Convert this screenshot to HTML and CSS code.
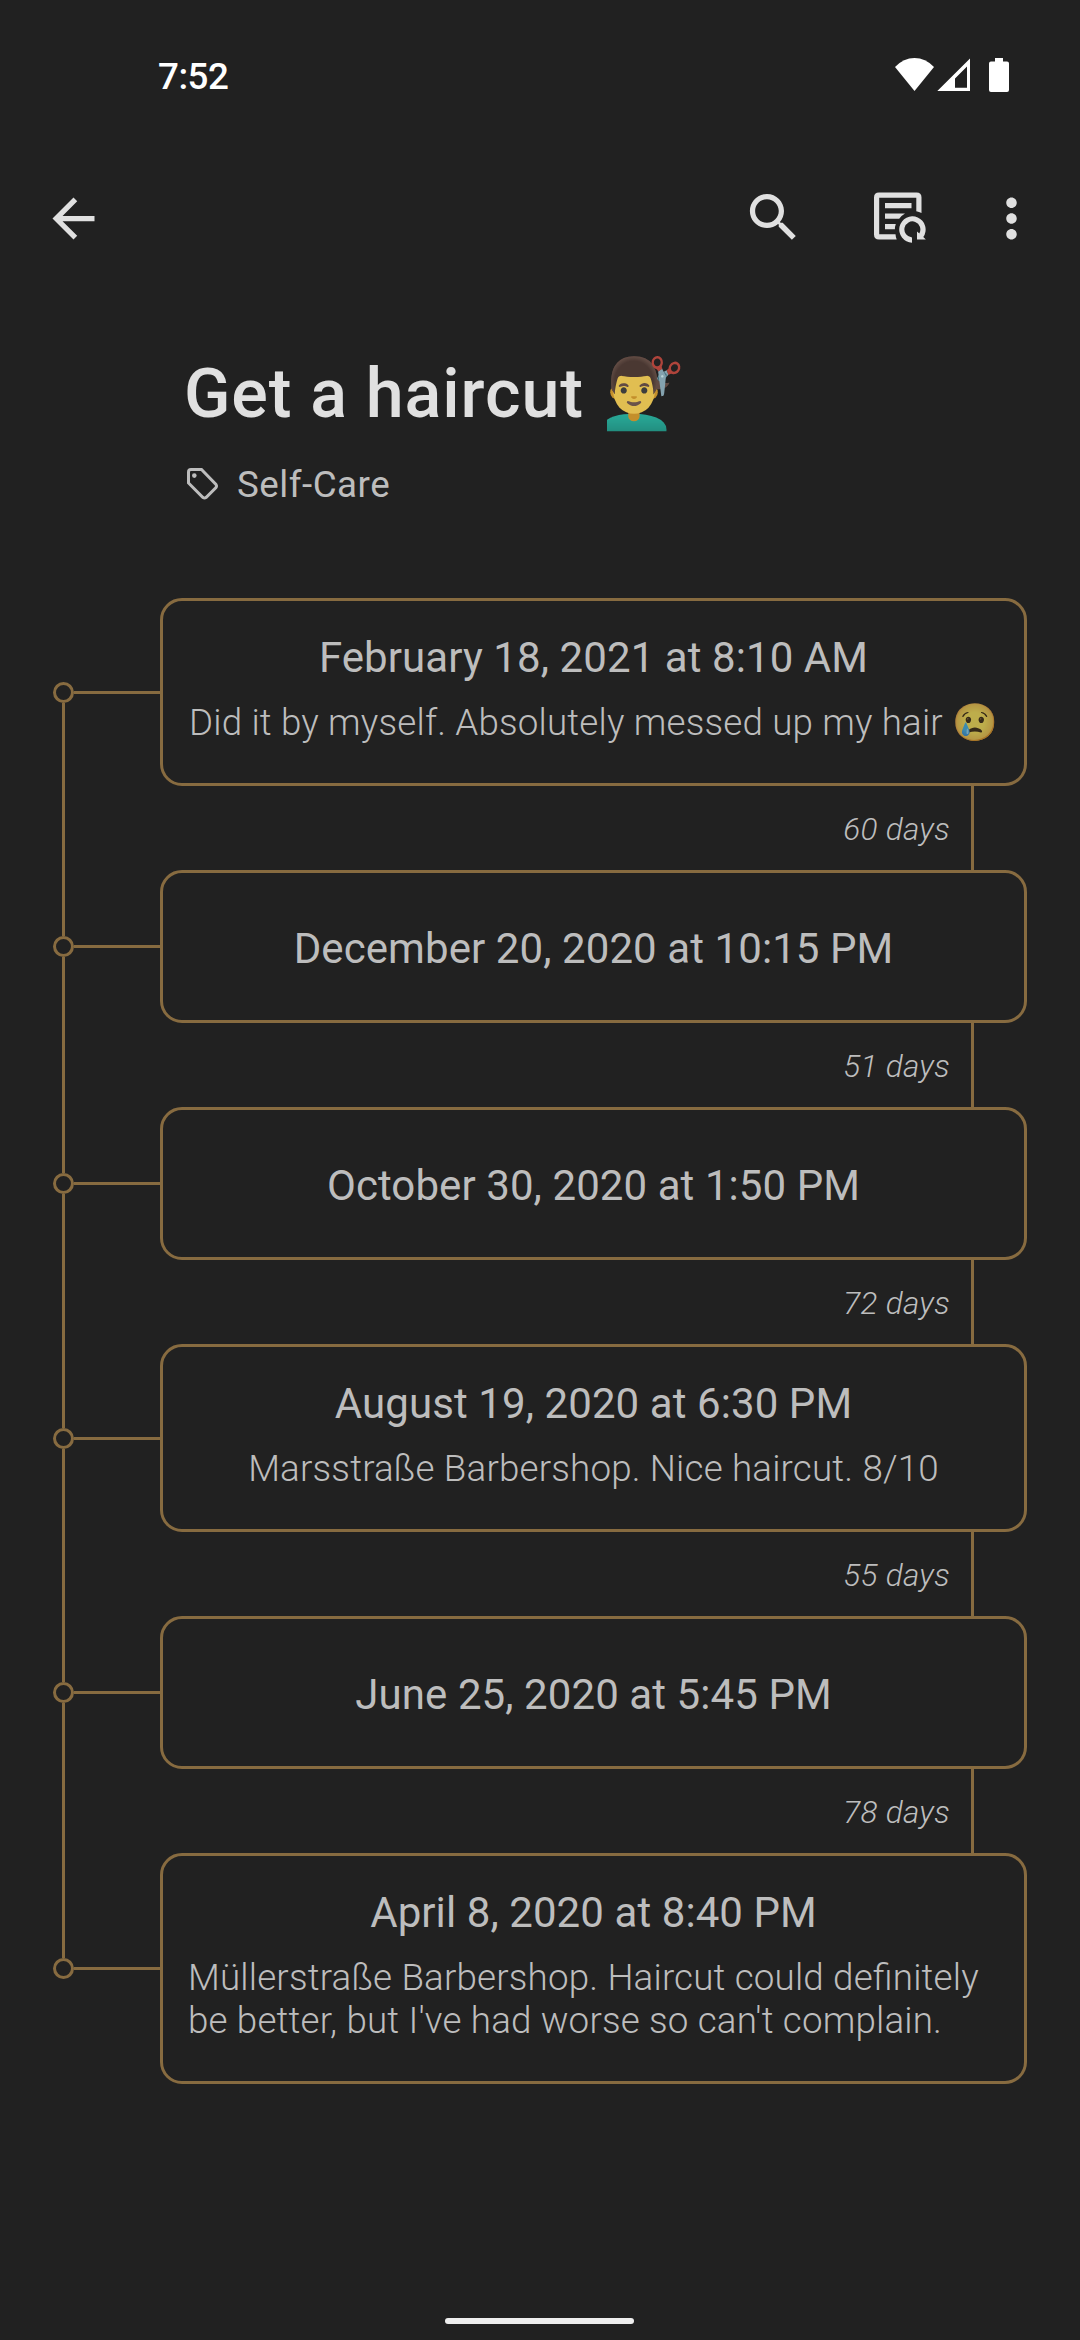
FILE: index.html
```html
<!DOCTYPE html>
<html lang="en">
<head>
<meta charset="utf-8">
<title>Get a haircut</title>
<link rel="stylesheet" href="styles.css">
</head>
<body>
<div class="screen">
  <div class="status">
    <span class="clock">7:52</span>
    <svg class="status-icons" width="116" height="36" viewBox="0 0 116 36" fill="#fff">
      <path d="M19.500 34 0 10Q8.500 1 19.500 1T39 10Z"/>
      <path fill-rule="evenodd" d="M42.300 34 75 1.500V34ZM60 30.800H72V9.500L60 21.500Z"/>
      <path d="M100 1h8v3.500h4q2 0 2 2V33q0 2-2 2H96q-2 0-2-2V6.500q0-2 2-2h4Z"/>
    </svg>
  </div>
  <header class="appbar">
    <svg class="icon back" viewBox="0 0 24 24"><path d="M20 11H7.830l5.590-5.590L12 4l-8 8 8 8 1.410-1.410L7.830 13H20v-2z"/></svg>
    <svg class="icon search" viewBox="0 0 24 24"><path d="M15.500 14h-.79l-.28-.27C15.410 12.590 16 11.110 16 9.500 16 5.910 13.090 3 9.500 3S3 5.910 3 9.500 5.910 16 9.500 16c1.610 0 3.090-.59 4.230-1.570l.27.28v.79l5 4.990L20.490 19l-4.990-5zm-6 0C7.010 14 5 11.990 5 9.500S7.010 5 9.500 5 14 7.010 14 9.500 11.990 14 9.500 14z"/></svg>
    <svg class="icon history" viewBox="0 0 63 63">
      <path d="M52.500 27V11.500q0-5-5-5H10q-5 0-5 5v37q0 5 5 5h17.700q-1-2.500-1.200-5.300H10.200V11.700H47.300V25.300q2.800.4 5.200 1.700Z"/>
      <path d="M16 17h26.500v5.200H16zM16 27.500h20q-3.500 2-5.800 5.200H16zM16 38h10.800q-.9 2.500-.9 5.200H16z"/>
      <path d="M43 56.700v-5.300a8 8 0 1 1 7.300-4l-2.300-2V53.500h8.800l-2.500-2.500a13.200 13.200 0 1 0-11.300 5.700Z"/>
    </svg>
    <svg class="icon more" viewBox="0 0 24 24"><path d="M12 8c1.100 0 2-.9 2-2s-.9-2-2-2-2 .9-2 2 .9 2 2 2zm0 2c-1.100 0-2 .9-2 2s.9 2 2 2 2-.9 2-2-.9-2-2-2zm0 6c-1.100 0-2 .9-2 2s.9 2 2 2 2-.9 2-2-.9-2-2-2z"/></svg>
  </header>
  <div class="heading">
    <h1>Get a haircut <span class="emoji">💇‍♂️</span></h1>
    <div class="tag">
      <svg width="32" height="32" viewBox="0 0 32 32"><path d="M4 1.500h10.500L29 16.500q1 1.500 0 3L19 29.500q-1.500 1-3 0L1.500 15V4Q1.500 1.500 4 1.500Z" fill="none" stroke="#bdbdbd" stroke-width="3"/><circle cx="7.300" cy="7.600" r="2.300" fill="#bdbdbd"/></svg>
      <span>Self-Care</span>
    </div>
  </div>
  <main class="timeline">
    <section class="entry first">
      <div class="rail"><i class="line"></i><i class="dot"></i><i class="line"></i></div><i class="arm"></i>
      <article class="card noted"><h2>February 18, 2021 at 8:10 AM</h2><p>Did it by myself. Absolutely messed up my hair <span class="emoji">😢</span></p></article>
    </section>
    <div class="between"><i class="line"></i><span>60 days</span><i class="line"></i></div>
    <section class="entry">
      <div class="rail"><i class="line"></i><i class="dot"></i><i class="line"></i></div><i class="arm"></i>
      <article class="card"><h2>December 20, 2020 at 10:15 PM</h2></article>
    </section>
    <div class="between"><i class="line"></i><span>51 days</span><i class="line"></i></div>
    <section class="entry">
      <div class="rail"><i class="line"></i><i class="dot"></i><i class="line"></i></div><i class="arm"></i>
      <article class="card"><h2>October 30, 2020 at 1:50 PM</h2></article>
    </section>
    <div class="between"><i class="line"></i><span>72 days</span><i class="line"></i></div>
    <section class="entry">
      <div class="rail"><i class="line"></i><i class="dot"></i><i class="line"></i></div><i class="arm"></i>
      <article class="card noted"><h2>August 19, 2020 at 6:30 PM</h2><p>Marsstraße Barbershop. Nice haircut. 8/10</p></article>
    </section>
    <div class="between"><i class="line"></i><span>55 days</span><i class="line"></i></div>
    <section class="entry">
      <div class="rail"><i class="line"></i><i class="dot"></i><i class="line"></i></div><i class="arm"></i>
      <article class="card"><h2>June 25, 2020 at 5:45 PM</h2></article>
    </section>
    <div class="between"><i class="line"></i><span>78 days</span><i class="line"></i></div>
    <section class="entry last">
      <div class="rail"><i class="line"></i><i class="dot"></i><i class="line"></i></div><i class="arm"></i>
      <article class="card noted"><h2>April 8, 2020 at 8:40 PM</h2><p>Müllerstraße Barbershop. Haircut could definitely be better, but I've had worse so can't complain.</p></article>
    </section>
  </main>
  <div class="home"></div>
</div>
</body>
</html>
```
FILE: styles.css
```css
* { box-sizing: border-box; margin: 0; padding: 0; }
body { background: #212121; color: #bdbdbd; font-family: Roboto, "Noto Color Emoji", sans-serif; }
svg { display: block; flex: none; }
.screen { width: 1080px; height: 2340px; display: flex; flex-direction: column; overflow: hidden; }

.status { height: 150px; padding: 57px 69px 0 158px; display: flex; justify-content: space-between; align-items: flex-start; }
.clock { font-size: 36.75px; font-weight: 500; line-height: 40px; letter-spacing: -0.5px; color: #fff; }

.appbar { height: 148px; padding: 36px 37px 0 42px; display: flex; align-items: flex-start; }
.icon { width: 63px; height: 63px; fill: #e0e0e0; }
.back { margin-top: 1px; }
.search { margin-left: auto; }
.history { margin-left: 64px; }
.more { margin: 1px 0 0 48px; }

.heading { height: 300px; padding: 56px 0 0 184px; }
h1 { font-size: 68.25px; font-weight: 500; line-height: 80px; letter-spacing: 0.88px; color: #e0e0e0; white-space: nowrap; }
h1 .emoji { margin-left: 1px; opacity: .93; filter: saturate(.72); }
.tag { display: flex; align-items: center; gap: 18px; margin-top: 29px; padding-left: 3px; }
.tag svg { margin-top: -2px; }
.tag span { font-size: 36.75px; line-height: 43px; letter-spacing: .5px; }

.timeline { display: flex; flex-direction: column; }
.entry { display: grid; grid-template-columns: 21px 86px 867px; padding-left: 53px; }
.rail { display: flex; flex-direction: column; align-items: center; }
.line { width: 3px; background: #876b40; }
.rail .line { flex: 1; }
.first .rail .line:first-child, .last .rail .line:last-child { background: none; }
.dot { width: 21px; height: 21px; border: 3px solid #876b40; border-radius: 50%; }
.arm { height: 3px; align-self: center; background: #876b40; }
.card { height: 153px; padding: 51px 25px 0; border: 3px solid #876b40; border-radius: 22px; display: flex; flex-direction: column; align-items: center; }
.noted { height: auto; padding: 32px 25px 39px; }
h2 { font-size: 42px; font-weight: 400; line-height: 50px; letter-spacing: .08px; }
.card p { margin-top: 18px; font-size: 36.75px; font-weight: 300; line-height: 43px; letter-spacing: .17px; font-feature-settings: "liga" 1; }
p .emoji { opacity: .74; filter: saturate(.75); line-height: 1; }

.between { height: 84px; padding: 0 106px 0 62px; display: flex; }
.between .line { height: 84px; }
.between span { margin: 25px 21px 0 auto; font-size: 31.5px; font-weight: 300; font-style: italic; line-height: 37px; letter-spacing: .3px; }

.home { width: 189px; height: 6px; margin: auto 0 16px 445px; border-radius: 3px; background: #eee; }
```
